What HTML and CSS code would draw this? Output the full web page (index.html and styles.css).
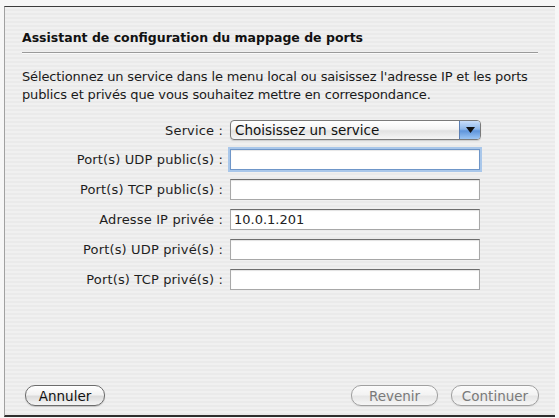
FILE: index.html
```html
<!DOCTYPE html>
<html lang="fr">
<head>
<meta charset="utf-8">
<title>Assistant de configuration du mappage de ports</title>
<link rel="stylesheet" href="styles.css">
</head>
<body>
<div class="sheet">
  <h1 class="title">Assistant de configuration du mappage de ports</h1>
  <div class="sep"></div>
  <p class="intro">Sélectionnez un service dans le menu local ou saisissez l'adresse IP et les ports publics et privés que vous souhaitez mettre en correspondance.</p>
  <div class="form">
    <label class="lbl">Service :</label>
    <div class="popup">
      <span class="popup-text">Choisissez un service</span>
      <span class="popup-arrow"><svg width="9" height="6" viewBox="0 0 9 6"><path d="M0 0H9L4.5 6Z" fill="#111"/></svg></span>
    </div>
    <label class="lbl">Port(s) UDP public(s) :</label>
    <div class="field focus"></div>
    <label class="lbl">Port(s) TCP public(s) :</label>
    <div class="field"></div>
    <label class="lbl">Adresse IP privée :</label>
    <div class="field">10.0.1.201</div>
    <label class="lbl">Port(s) UDP privé(s) :</label>
    <div class="field"></div>
    <label class="lbl">Port(s) TCP privé(s) :</label>
    <div class="field"></div>
  </div>
  <div class="footer">
    <button class="btn btn-cancel">Annuler</button>
    <div class="spacer"></div>
    <button class="btn btn-back disabled">Revenir</button>
    <button class="btn btn-next disabled">Continuer</button>
  </div>
</div>
</body>
</html>
```

FILE: styles.css
```css
html, body {
  margin: 0;
  padding: 0;
  background: #f6f6f6;
  width: 559px;
  height: 418px;
  overflow: hidden;
  font-family: "DejaVu Sans", "Liberation Sans", sans-serif;
}

.sheet {
  box-sizing: border-box;
  margin: 6px 4px 0 4px;
  height: 411px;
  border-top: 1px solid #3c3c3c;
  border-left: 1px solid #a0a0a0;
  border-bottom: 2px solid #2e2e2e;
  background: repeating-linear-gradient(to bottom, #f0f0f0 0 2px, #eaeaea 2px 4px);
  padding: 23px 17px 9px 17px;
  display: flex;
  flex-direction: column;
  color: #111;
}

.title {
  margin: 0;
  font-size: 12.5px;
  font-weight: bold;
  line-height: 16px;
}

.sep {
  margin-top: 6px;
  height: 1px;
  background: #9a9a9a;
  box-shadow: 0 1px 0 #fafafa;
}

.intro {
  margin: 15px 0 0 0;
  font-size: 13px;
  line-height: 18px;
  letter-spacing: -0.15px;
  color: #1a1a1a;
}

.form {
  margin-top: 16px;
  display: grid;
  grid-template-columns: 201px 250px;
  column-gap: 7px;
  row-gap: 9px;
  align-items: center;
}

.lbl {
  text-align: right;
  font-size: 13px;
  letter-spacing: 0.15px;
  color: #1e1e1e;
}

.popup {
  box-sizing: border-box;
  height: 20px;
  width: 251px;
  border: 1px solid #7a7a7a;
  border-radius: 4px;
  background: linear-gradient(to bottom, #ffffff 0%, #f4f4f4 45%, #e2e2e2 55%, #f6f6f6 100%);
  display: flex;
  align-items: center;
  overflow: hidden;
  box-shadow: 0 1px 1px rgba(0,0,0,0.15);
}

.popup-text {
  flex: 1;
  padding-left: 4px;
  font-size: 13.5px;
  color: #111;
}

.popup-arrow {
  width: 20px;
  height: 100%;
  display: flex;
  align-items: center;
  justify-content: center;
  background: linear-gradient(to bottom, #c9defa 0%, #8fb8ea 45%, #5f95db 55%, #9cc6f4 100%);
  border-left: 1px solid #5b7fb4;
}

.field {
  box-sizing: border-box;
  height: 21px;
  background: #fff;
  border: 1px solid #a8a8a8;
  border-top-color: #6e6e6e;
  box-shadow: inset 0 1px 1px rgba(0,0,0,0.12);
  font-size: 13px;
  line-height: 19px;
  padding-left: 3px;
  color: #222;
}

.field.focus {
  border-color: #6f96c8;
  box-shadow: 0 0 0 2px #a9c7ea, inset 0 1px 1px rgba(0,0,0,0.1);
}

.footer {
  margin-top: auto;
  display: flex;
  align-items: center;
  padding-left: 3px;
  margin-right: -1px;
}

.spacer { flex: 1; }

.btn {
  box-sizing: border-box;
  height: 21px;
  border-radius: 10px;
  border: 1px solid #6c6c6c;
  background: linear-gradient(to bottom, #ffffff 0%, #f2f2f2 45%, #dcdcdc 55%, #f5f5f5 100%);
  font-family: "DejaVu Sans", "Liberation Sans", sans-serif;
  font-size: 13.5px;
  color: #111;
  padding: 0;
  box-shadow: 0 1px 1px rgba(0,0,0,0.18);
}

.btn-cancel { width: 80px; }
.btn-back { width: 87px; margin-right: 13px; }
.btn-next { width: 88px; }

.btn.disabled {
  color: #7a7a7a;
  border-color: #a0a0a0;
  background: linear-gradient(to bottom, #fbfbfb 0%, #f3f3f3 45%, #e6e6e6 55%, #f6f6f6 100%);
  box-shadow: 0 1px 1px rgba(0,0,0,0.08);
}
```
